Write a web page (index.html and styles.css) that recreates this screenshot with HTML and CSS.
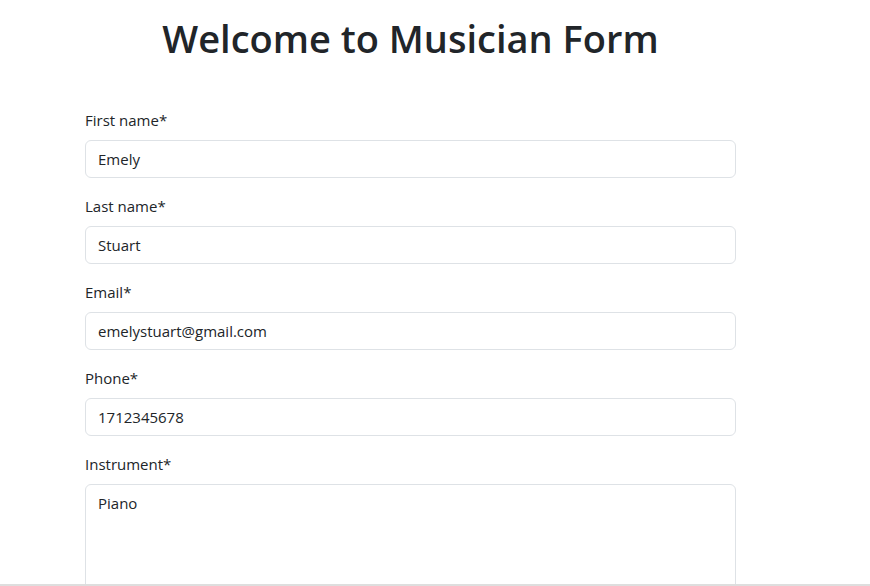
FILE: index.html
```html
<!DOCTYPE html>
<html lang="en">
<head>
<meta charset="utf-8">
<title>Musician Form</title>
<link rel="stylesheet" href="styles.css">
</head>
<body>
<div class="viewport">
  <main class="container">
    <h1 class="title">Welcome to Musician Form</h1>
    <form class="form">
      <div class="field">
        <label class="label" for="first">First name*</label>
        <input class="control" id="first" type="text" value="Emely">
      </div>
      <div class="field">
        <label class="label" for="last">Last name*</label>
        <input class="control" id="last" type="text" value="Stuart">
      </div>
      <div class="field">
        <label class="label" for="email">Email*</label>
        <input class="control" id="email" type="email" value="emelystuart@gmail.com">
      </div>
      <div class="field">
        <label class="label" for="phone">Phone*</label>
        <input class="control" id="phone" type="text" value="1712345678">
      </div>
      <div class="field">
        <label class="label" for="instrument">Instrument*</label>
        <textarea class="control area" id="instrument" rows="6">Piano</textarea>
      </div>
    </form>
  </main>
</div>
</body>
</html>
```
FILE: styles.css
```css
* { box-sizing: border-box; }
html, body { margin: 0; padding: 0; background: #fff; }
body {
  font-family: "Open Sans", "Noto Sans", sans-serif;
  color: #212529;
  font-size: 15px;
  line-height: 1.5;
}
.viewport {
  height: 586px;
  overflow: hidden;
  border-bottom: 2px solid #dedede;
}
.container {
  width: 651px;
  margin-left: 85px;
}
.title {
  margin: 16px 0 46px;
  text-align: center;
  font-size: 38px;
  font-weight: 600;
  line-height: 1.2;
  letter-spacing: 0;
}
.form { display: flex; flex-direction: column; gap: 16px; }
.field { display: flex; flex-direction: column; }
.label {
  display: block;
  margin-bottom: 8px;
  line-height: 24px;
}
.control {
  display: block;
  width: 100%;
  height: 38px;
  padding: 6px 12px;
  font: inherit;
  line-height: 24px;
  color: #212529;
  background: #fff;
  border: 1px solid #dee2e6;
  border-radius: 6px;
  outline: none;
}
.area {
  height: 160px;
  resize: none;
  padding-top: 6px;
}
```
